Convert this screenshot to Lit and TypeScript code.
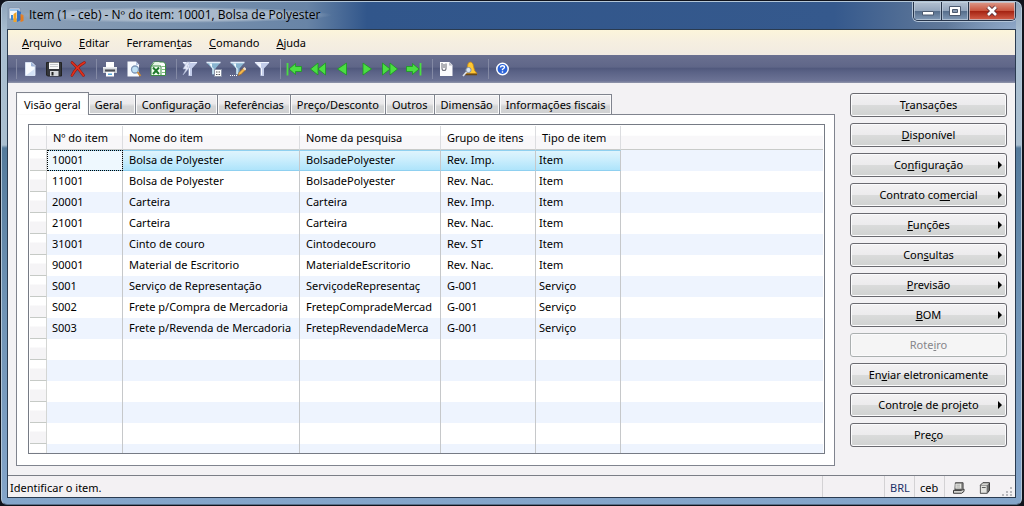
import { LitElement, html, svg, css, nothing, TemplateResult } from "lit";
import { customElement, state } from "lit/decorators.js";
import { classMap } from "lit/directives/class-map.js";

/** Splits "Con&sultas" into text with its access key underlined. */
function mnemonic(text: string) {
  const i = text.indexOf("&");
  if (i < 0) return html`${text}`;
  return html`${text.slice(0, i)}<u>${text[i + 1]}</u>${text.slice(i + 2)}`;
}

const plain = (text: string) => text.replace("&", "");

const funnel = svg`
  <path d="M0.5 1.5h15l-5.5 6v7.5h-3.5v-7.5z" fill="#c3cdea"/>
  <path d="M2 2.2h5v4.3l1 1v6.5h-1v-6.8z" fill="#f4f7ff"/>
  <path d="M1 1.5h14" stroke="#eef2ff"/>`;

const blueFunnel = svg`
  <path d="M0.5 1.5h14l-5 6v6h-3.5v-6z" fill="#88b4d0"/>
  <path d="M3 2.5h3v3.5l1.6 1.6v5.4h-1v-5z" fill="#f0faff"/>
  <path d="M0.5 1.5h14" stroke="#e4eefa" stroke-width="1.4"/>`;

const green = "#4ade42";
const edge = "#1c9a20";

const ICONS: Record<string, TemplateResult> = {
  new: svg`<path d="M3.5 1.5h6.500l3 3v10h-9.500z" fill="#f8fbff" stroke="#d5e0f2"/><path d="M9.500 1.500v3.500h3.500" fill="#9fb4d8" stroke="#9fb4d8"/><path d="M4.500 14h8V8z" fill="#d4e2f6"/>`,
  save: svg`<path d="M0.5 1.5h15v13.5h-14l-1-1z" fill="#33353a" stroke="#222"/><path d="M3 1.5h10v6.5H3z" fill="#f8f8f8"/><path d="M4 3.5h8M4 5.5h8" stroke="#c5c8cc"/><path d="M4 10h8.5v5H4z" fill="#d6d8dc"/><path d="M5.5 11h2v3.5h-2z" fill="#222"/>`,
  remove: svg`<path d="M2 1.5C6 5 10 9 13.500 14.500M14.500 1.500C9 4.500 4.500 9.500 2 14.500" fill="none" stroke="#8f1710" stroke-width="2.600" stroke-linecap="round"/><path d="M2 1.500C6 5 10 9 13.500 14.500M14.500 1.500C9 4.500 4.500 9.500 2 14.500" fill="none" stroke="#e2301c" stroke-width="1.600" stroke-linecap="round"/>`,
  print: svg`<path d="M4 1h8v5H4z" fill="#fff"/><path d="M1 6h14v6H1z" fill="#c9ccd2"/><path d="M1 6h14v1.500H1z" fill="#eceef2"/><path d="M3 8.500h10v2H3z" fill="#4a4d55"/><path d="M4 11h8v4.500H4z" fill="#fff"/><path d="M6 12.500h4v1.500H6z" fill="#58a8d8"/>`,
  preview: svg`<path d="M1.500 0.500h8.500l3 3v12H1.500z" fill="#f8fbff"/><path d="M10 0.500V4h3" fill="#b4c4e0"/><circle cx="9" cy="8.500" r="3.500" fill="#bfe0f4" stroke="#7d97b8" stroke-width="1.300"/><path d="M11.500 11l3 4" stroke="#c98a3c" stroke-width="2"/>`,
  excel: svg`<path d="M4 1h9.500l2 2v11.500H4z" fill="#fff" stroke="#3d8c46"/><path d="M1 4.500L3.500 1h6v13H1z" fill="#e6f5e4"/><path d="M1 5L4 1.500" stroke="#3d8c46"/><path d="M1 5h10v9.500H1z" fill="#f5fff4" stroke="#3d8c46"/><path d="M3 6.500l6 6.500M9 6.500L3 13" stroke="#1f7a2c" stroke-width="2"/><path d="M12 5.500h3M12 8.500h3M12 11.500h3" stroke="#7cc07c"/>`,
  filterSel: svg`${funnel}<path d="M5 1L1 8h3l-3 6 7-8H5l3-5z" fill="#e4e9f8" stroke="#aab4d2" stroke-width=".6"/>`,
  filterGrid: svg`${blueFunnel}<path d="M8.500 8.500h7v7h-7z" fill="#fff" stroke="#8a93a8"/><path d="M10 11h1.500M12.500 11H14M10 13.500h1.500M12.500 13.500H14" stroke="#555"/>`,
  filterEdit: svg`${blueFunnel}<path d="M0 14.500h8" stroke="#fff" stroke-dasharray="1 1"/><path d="M8 14.500l1-3 5-5 2 2-5 5z" fill="#f3b64a" stroke="#99642a" stroke-width=".7"/><path d="M13 7.500l2 2 1.500-1.500-2-2z" fill="#e8e0d8"/>`,
  filterOff: funnel,
  first: svg`<path d="M1.500 2v12.500" stroke="${green}" stroke-width="1.800"/><path d="M3 8l6.500-5.500v3h6v5h-6v3z" fill="${green}" stroke="${edge}" stroke-width=".8"/>`,
  back: svg`<path d="M0.500 8L8 2v12zM8 8l7.500-6v12z" fill="${green}" stroke="${edge}" stroke-width=".8"/>`,
  prev: svg`<path d="M3.500 8L12.500 2v12z" fill="${green}" stroke="${edge}" stroke-width=".8"/>`,
  next: svg`<path d="M13.500 8L5 2v12z" fill="${green}" stroke="${edge}" stroke-width=".8"/>`,
  forward: svg`<path d="M15.500 8L8 2v12zM8 8L.5 2v12z" fill="${green}" stroke="${edge}" stroke-width=".8"/>`,
  last: svg`<path d="M14.500 2v12.500" stroke="${green}" stroke-width="1.800"/><path d="M13 8L6.500 2.500v3h-6v5h6v3z" fill="${green}" stroke="${edge}" stroke-width=".8"/>`,
  attach: svg`<path d="M2 1h9.500l3 3v11H2z" fill="#fbfbfd"/><path d="M11 1v3.500h3.500" fill="#b9bcc8"/><path d="M4 2v5.500q0 2 2 2t2-2V2.500M6 3v4" fill="none" stroke="#73757f" stroke-width="1.100"/>`,
  alert: svg`<path d="M8 1q3 0 3.500 4.500t3.500 7H3.500q2-3 2-7T8 1z" fill="#ffc832" stroke="#c98a14" stroke-width=".8"/><path d="M3 13.500h12" stroke="#6b4a14" stroke-width="1.600"/><circle cx="6.500" cy="9" r="2.600" fill="#d9e6f2" stroke="#8592a8"/><path d="M4.500 11L1 15" stroke="#d9dde6" stroke-width="1.600"/>`,
  help: svg`<circle cx="8.500" cy="8" r="5.700" fill="#2a62d8" stroke="#fff" stroke-width="1.500"/><path d="M6.500 6.500Q6.500 4.700 8.500 4.700t2 1.600Q10.500 7.300 8.500 8.300v1" fill="none" stroke="#fff" stroke-width="1.400"/><path d="M8.500 10.300v1.500" stroke="#fff" stroke-width="1.400"/>`,
};

const TOOLS: [string, string][][] = [
  [["new", "Novo"], ["save", "Salvar"], ["remove", "Excluir"]],
  [["print", "Imprimir"], ["preview", "Visualizar impressão"], ["excel", "Exportar para o Excel"]],
  [["filterSel", "Filtrar por seleção"], ["filterGrid", "Filtrar por grade"], ["filterEdit", "Filtro avançado"], ["filterOff", "Remover filtro"]],
  [["first", "Primeiro"], ["back", "Página anterior"], ["prev", "Anterior"], ["next", "Próximo"], ["forward", "Próxima página"], ["last", "Último"]],
  [["attach", "Documentos"], ["alert", "Alertas"]],
  [["help", "Ajuda"]],
];

const MENUS = ["&Arquivo", "&Editar", "Ferramen&tas", "&Comando", "&Ajuda"];

const TABS = ["Visão geral", "Geral", "Configuração", "Referências", "Preço/Desconto", "Outros", "Dimensão", "Informações fiscais"];

const COLUMNS = ["Nº do item", "Nome do item", "Nome da pesquisa", "Grupo de itens", "Tipo de item"];

const ITEMS = [
  ["10001", "Bolsa de Polyester", "BolsadePolyester", "Rev. Imp.", "Item"],
  ["11001", "Bolsa de Polyester", "BolsadePolyester", "Rev. Nac.", "Item"],
  ["20001", "Carteira", "Carteira", "Rev. Imp.", "Item"],
  ["21001", "Carteira", "Carteira", "Rev. Nac.", "Item"],
  ["31001", "Cinto de couro", "Cintodecouro", "Rev. ST", "Item"],
  ["90001", "Material de Escritorio", "MaterialdeEscritorio", "Rev. Nac.", "Item"],
  ["S001", "Serviço de Representação", "ServiçodeRepresentaç", "G-001", "Serviço"],
  ["S002", "Frete p/Compra de Mercadoria", "FretepCompradeMercad", "G-001", "Serviço"],
  ["S003", "Frete p/Revenda de Mercadoria", "FretepRevendadeMerca", "G-001", "Serviço"],
];
const BLANK_ROWS = 6;

const COMMANDS: { label: string; menu?: boolean; disabled?: boolean }[] = [
  { label: "T&ransações" },
  { label: "&Disponível" },
  { label: "Co&nfiguração", menu: true },
  { label: "Contrato co&mercial", menu: true },
  { label: "&Funções", menu: true },
  { label: "Con&sultas", menu: true },
  { label: "&Previsão", menu: true },
  { label: "&BOM", menu: true },
  { label: "Rote&iro", disabled: true },
  { label: "En&viar eletronicamente" },
  { label: "Contro&le de projeto", menu: true },
  { label: "Pre&ço" },
];

const resets = css`
  * { box-sizing: border-box; }
  button { font: inherit; color: inherit; margin: 0; padding: 0; border: 0; background: none; }
  svg { display: block; }
`;

@customElement("title-bar")
class TitleBar extends LitElement {
  static styles = [resets, css`
    :host {
      display: flex; align-items: flex-start; height: 27px; overflow: hidden;
      background:
        radial-gradient(ellipse 70px 34px at 100% 100%, #8fa8c8 0, #8fa8c800 100%),
        linear-gradient(90deg, #8ea2b8 0, #6884a6 300px, #31568b 360px, #35598d 82%, #5d7698 92%, #6e88a8 100%);
    }
    .caption { display: flex; align-items: center; gap: 5px; height: 26px; padding: 0 14px 0 1px; flex: 1; }
    .title { font-family: "Open Sans", "Noto Sans", sans-serif; font-size: 12px; font-weight: 400; white-space: nowrap;
      background: radial-gradient(closest-side, #a9b9cb 70%, #a9b9cb00); padding: 0 12px; margin: 0 0 0 -12px; }
    .controls { display: flex; border: 1px solid #26344a; border-top: 0; border-radius: 0 0 5px 5px; overflow: hidden; box-shadow: 0 0 0 1px #b4c5d8; }
    .controls button { width: 27px; height: 18px; display: grid; place-items: center; border-left: 1px solid #26344a;
      background: linear-gradient(#b3c1d2 0, #93a5bc 48%, #566e8c 52%, #8199b6 100%); box-shadow: inset 0 0 0 1px #c5d2e0aa; }
    .controls button:first-child { border-left: 0; }
    .controls .close { width: 47px; background: linear-gradient(#dc9a8a 0, #c9553f 48%, #a52312 52%, #d4604a 100%); }
  `];
  render() {
    return html`
      <div class="caption">
        <svg width="16" height="16" viewBox="0 0 16 16" aria-hidden="true">
          <path d="M1 1h11v11H1z" fill="#f3f6fa" stroke="#8094b0"/>
          <path d="M2 2h9v2H2z" fill="#9cc4ea"/>
          <path d="M3 8h2v5H3z" fill="#3a88d8"/>
          <path d="M5.500 7l3-2v10h-3z" fill="#f0a428"/><path d="M9 3l4 2v8l-4 2z" fill="#3472c4"/>
          <path d="M12.500 7l3 1v6l-3 1z" fill="#e87c1c"/>
        </svg>
        <h1 class="title">Item (1 - ceb) - Nº do item: 10001, Bolsa de Polyester</h1>
      </div>
      <div class="controls">
        <button aria-label="Minimizar"><svg width="12" height="12"><path d="M0.500 6.500h11v3.500H.500z" fill="#fff" stroke="#4c5a70"/></svg></button>
        <button aria-label="Maximizar"><svg width="12" height="12"><path d="M.500 1.500h11v9H.500z" fill="#fff" stroke="#4c5a70"/><path d="M3.500 4.500h5v3h-5z" fill="#8597b0" stroke="#4c5a70"/></svg></button>
        <button class="close" aria-label="Fechar"><svg width="12" height="12"><path d="M2 2l8 8M10 2l-8 8" stroke="#5a3038" stroke-width="4.500"/><path d="M2 2l8 8M10 2l-8 8" stroke="#fff" stroke-width="2.600"/></svg></button>
      </div>`;
  }
}

@customElement("tool-strip")
class ToolStrip extends LitElement {
  static styles = [resets, css`
    :host { display: flex; align-items: center; height: 28px; padding-left: 8px;
      background: linear-gradient(#6a7090 0, #5f6688 44%, #50587c 46%, #5a6286 60%, #6c7395 92%, #9297ac 100%); }
    .group { display: flex; align-items: center; }
    .group::before { content: ""; width: 1px; height: 20px; background: #8389a4; margin-right: 1px; }
    .group + .group::before { margin-left: 6px; }
    button { width: 24px; height: 24px; display: grid; place-items: center; }
  `];
  render() {
    return TOOLS.map((group) => html`
      <div class="group">
        ${group.map(([icon, label]) => html`
          <button aria-label=${label} title=${label}>
            <svg width="16" height="16" viewBox="0 0 16 16">${ICONS[icon]}</svg>
          </button>`)}
      </div>`);
  }
}

@customElement("item-grid")
class ItemGrid extends LitElement {
  @state() private selected = 0;

  static styles = [resets, css`
    :host { display: block; overflow: hidden; border: 1px solid #767b85; background: #fff; padding: 1px 1px 0 1px; }
    table { width: 100%; border-collapse: separate; border-spacing: 0; table-layout: fixed; }
    .c-mark { width: 17px; } .c-id { width: 76px; } .c-name { width: 177px; }
    .c-search { width: 141px; } .c-group { width: 95px; } .c-type { width: 85px; }
    th, td { padding: 0 0 0 6px; text-align: left; font-weight: 400; white-space: nowrap; overflow: hidden; border-right: 1px solid #c6c8ca; }
    thead th, thead td { height: 24px; border-bottom: 1px solid #c9cbc9; border-right-color: #dcdde0;
      background: linear-gradient(#fff 40%, #f8f7f9 45%, #f8f7f9); }
    tbody td, tbody th { height: 21px; line-height: 18px; padding-bottom: 2px; }
    tr > :last-child { border-right: 0; }
    tbody tr:nth-child(odd) td { background: #eef4fe; }
    tbody .mark { padding: 0; border-bottom: 1px solid #c6cac6; border-right: 1px solid #d4d6d4; background: linear-gradient(#fff 40%, #f5f4f6 45%); }
    tbody tr.selected:nth-child(n) td { background: linear-gradient(#dff4fd 0, #cbeefd 45%, #aee4fb 100%); border-top: 1px solid #8fd0f0; border-bottom: 1px solid #8fd0f0; line-height: 16px; }
    tbody tr.selected:nth-child(n) td.key { background: #eef8fe; outline: 1px dotted #000; outline-offset: -1px; }
    tbody tr.selected:nth-child(n) td:last-child { background: #eef4fe; border-color: #eef4fe; }
    tbody td.type { padding-left: 3px; }
    tbody td.key { padding-left: 5px; }
  `];
  render() {
    const blanks = Array.from({ length: BLANK_ROWS }, () => COLUMNS.map(() => ""));
    return html`
      <table>
        <colgroup>
          <col class="c-mark"><col class="c-id"><col class="c-name"><col class="c-search"><col class="c-group"><col class="c-type"><col>
        </colgroup>
        <thead><tr><td></td>${COLUMNS.map((c) => html`<th scope="col">${c}</th>`)}<td></td></tr></thead>
        <tbody>
          ${[...ITEMS, ...blanks].map((row, r) => html`
            <tr class=${classMap({ selected: r === this.selected })} @click=${() => { if (r < ITEMS.length) this.selected = r; }}>
              <th class="mark"></th>
              ${row.map((cell, c) => html`<td class=${classMap({ key: c === 0, type: c === 4 })}>${cell}</td>`)}
              <td></td>
            </tr>`)}
        </tbody>
      </table>`;
  }
}

@customElement("app-root")
class AppRoot extends LitElement {
  @state() private tab = 0;

  static styles = [resets, css`
    :host {
      display: flex; flex-direction: column; height: 100vh; box-sizing: border-box; overflow: hidden;
      font: 11px/16px "Noto Sans", "Open Sans", sans-serif; color: #000; background: #10131c;
    }
    .window {
      flex: 1; display: flex; flex-direction: column; min-height: 0; margin: 1px 2px 1px 1px; padding: 0 5px 6px;
      border: 1px solid #b4c7d8; border-bottom-color: #5a6f88; border-radius: 7px 7px 6px 6px; overflow: hidden;
      background: linear-gradient(#8ea3ba 0, #a9bed0 30px, #aabfd0 143px, #557b9c 146px, #6f93b5 300px, #84a5ca 100%);
    }
    .client { flex: 1; display: flex; flex-direction: column; min-height: 0; border: 1px solid #2a3b50; background: #f3f2f4; }
    .menu { display: flex; align-items: center; gap: 17px; height: 25px; padding: 0 14px;
      background: linear-gradient(#fcf5da 0, #f6efe0 45%, #f1ebe2 100%); }
    .body { flex: 1; display: flex; gap: 15px; min-height: 0; padding: 9px 8px 9px 8px; }
    .main { flex: 1; min-width: 0; display: flex; flex-direction: column; }
    .tabs { display: flex; align-items: flex-end; height: 22px; }
    .tabs button { height: 20px; min-width: 47px; padding: 0 6px; text-align: left; white-space: nowrap; line-height: 19px; border: 1px solid #80848e; border-left: 0; border-bottom: 0;
      background: linear-gradient(#f2f1f3 0, #ebeaec 45%, #d4d5d6 60%, #d0d1d2 100%); box-shadow: inset 0 0 0 1px #fafafa; }
    .tabs .active { height: 23px; padding: 0 7px; margin-bottom: -1px; background: #fff; border-left: 1px solid #80848e; position: relative; line-height: 21px; }
    .panel { flex: 1; min-height: 0; display: flex; padding: 9px 9px 11px 11px; border: 1px solid #80848e; background: #fff; }
    item-grid { flex: 1; min-width: 0; }
    .commands { width: 157px; padding-top: 1px; display: flex; flex-direction: column; gap: 6px; }
    .commands button { height: 24px; display: grid; grid-template-columns: 8px 1fr 8px; align-items: center; border: 1px solid #6a6a70; border-radius: 3px;
      background: linear-gradient(#f3f2f3 0, #ecebed 48%, #dadbdb 52%, #d0d2d1 100%); box-shadow: inset 0 0 0 1px #fbfbfc; }
    .commands .label { grid-column: 2; text-align: center; white-space: nowrap; }
    .commands button:disabled { color: #86868a; border-color: #abb0b0; background: #f5f5f5; }
    .status { display: flex; align-items: stretch; height: 22px; border-top: 1px solid #7a7e86; background: #f3f1f3; }
    .status > * { display: flex; align-items: center; padding: 2px 4px 0 5px; }
    .status .hint { flex: 1; padding-left: 2px; }
    .cell { border-left: 1px solid #d3d2d4; }
    .empty { width: 62px; }
    .code { width: 30px; padding-right: 0; }
    .currency { color: #1c3068; }
    .status .tray { width: 50px; gap: 14px; padding-left: 8px; }
    .status .grip { width: 21px; align-items: flex-end; justify-content: flex-end; padding: 0 2px 1px; }
  `];
  render() {
    return html`
      <div class="window">
        <title-bar></title-bar>
        <div class="client">
          <nav class="menu">${MENUS.map((m) => html`<button>${mnemonic(m)}</button>`)}</nav>
          <tool-strip role="toolbar"></tool-strip>
          <div class="body">
            <main class="main">
              <div class="tabs" role="tablist">
                ${TABS.map((t, i) => html`
                  <button role="tab" aria-selected=${i === this.tab ? "true" : "false"} class=${classMap({ active: i === this.tab })}
                    @click=${() => (this.tab = i)}>${t}</button>`)}
              </div>
              <div class="panel" role="tabpanel"><item-grid></item-grid></div>
            </main>
            <aside class="commands">
              ${COMMANDS.map((c) => html`
                <button ?disabled=${!!c.disabled} aria-label=${plain(c.label)}>
                  <span class="label">${mnemonic(c.label)}</span>
                  ${c.menu ? html`<svg width="5" height="8"><path d="M0 0l4 4-4 4z"/></svg>` : nothing}
                </button>`)}
            </aside>
          </div>
          <footer class="status">
            <span class="hint">Identificar o item.</span>
            <span class="cell empty"></span>
            <span class="cell code currency">BRL</span>
            <span class="cell code">ceb</span>
            <span class="cell tray">
              <svg width="12" height="12" viewBox="0 0 12 12"><path d="M2.500 .500h8v6l-1.500 1.500h-7z" fill="#8e8f8c" stroke="#444"/><path d="M2.500 1.500h6v5h-6z" fill="#ecece8"/><path d="M3.500 3h4M3.500 5h4" stroke="#a4a5a2"/><path d="M.500 8.500h8.500l2.500-1.500v2.500L9 11.500H.500z" fill="#d4d4d0" stroke="#333"/></svg>
              <svg width="12" height="12" viewBox="0 0 12 12"><path d="M1.500 3L4 .500h7v8L8.500 11.500h-7z" fill="#6c6d6c" stroke="#333"/><path d="M1.500 3h7v8.500h-7z" fill="#e4e4e0" stroke="#666"/><path d="M2 3L4 1h6.500L8.500 3z" fill="#d4d4d0"/><path d="M3 5.500h4" stroke="#555"/></svg>
            </span>
            <span class="grip"><svg width="11" height="10"><path d="M8 1h2v2H8zM4 5h2v2H4zM8 5h2v2H8zM0 8h2v2H0zM4 8h2v2H4zM8 8h2v2H8z" fill="#b9b9bd"/></svg></span>
          </footer>
        </div>
      </div>`;
  }
}
